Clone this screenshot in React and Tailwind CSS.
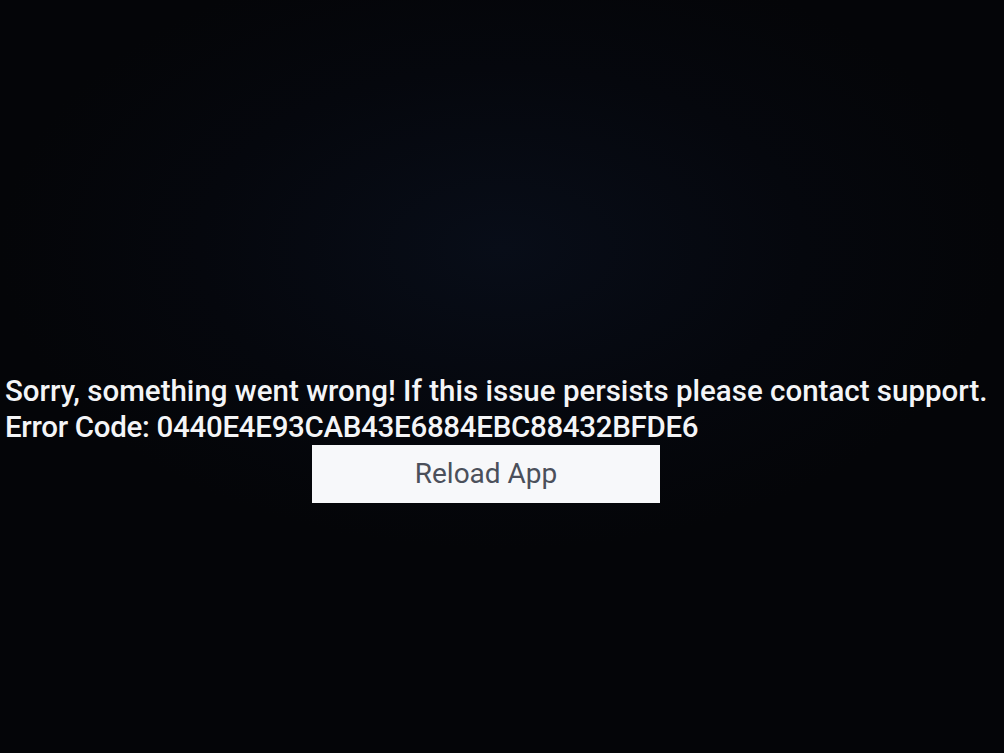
// Error screen
function App() {
    const handleReload = () => {
        window.location.reload();
    };

    return (
        <div className="min-h-screen w-full bg-[#05070c] bg-[radial-gradient(ellipse_50%_40%_at_50%_33%,#080d18_0%,#05070d_60%,#040508_100%)] font-['Roboto',sans-serif]">
            <div className="flex flex-col pt-[373px] pl-[5px]">
                <p className="text-[29.5px] leading-[36px] font-medium text-[#f4f5f7] whitespace-nowrap">
                    Sorry, something went wrong! If this issue persists please contact support.
                </p>
                <p className="text-[29.5px] leading-[36px] font-medium text-[#f4f5f7] whitespace-nowrap tracking-[-0.3px]">
                    Error Code: 0440E4E93CAB43E6884EBC88432BFDE6
                </p>
                <button
                    onClick={handleReload}
                    className="ml-[307px] w-[348px] h-[58px] bg-[#f7f8fa] text-[#4b505b] text-[28px] font-normal flex items-center justify-center"
                >
                    Reload App
                </button>
            </div>
        </div>
    );
}

export default App;
